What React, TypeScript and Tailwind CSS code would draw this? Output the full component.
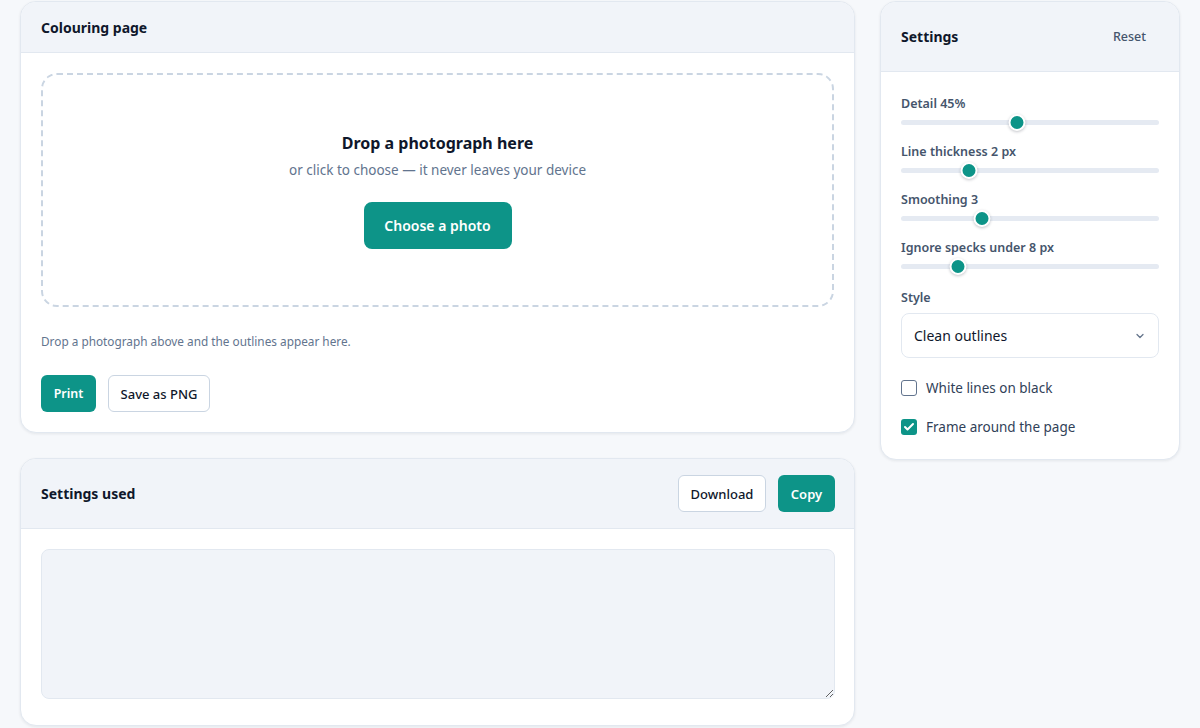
import { useState } from "react";

const sliders = [
  { label: "Detail 45%", pct: 44.8 },
  { label: "Line thickness 2 px", pct: 24.8 },
  { label: "Smoothing 3", pct: 30.2 },
  { label: "Ignore specks under 8 px", pct: 20.2 },
];

function Slider({ label, pct }: { label: string; pct: number }) {
  return (
    <div>
      <div className="text-[12.5px] font-semibold leading-5 text-slate-600">{label}</div>
      <div className="relative h-4">
        <div className="absolute left-0 right-0 top-[6px] h-[5px] rounded-full bg-[#e5eaf2]" />
        <div
          className="absolute top-[-0.5px] h-[17px] w-[17px] -translate-x-1/2 rounded-full border-2 border-white bg-[#0d9488] shadow-[0_1px_3px_rgba(15,23,42,0.25)]"
          style={{ left: `calc(8.5px + (100% - 17px) * ${pct / 100})` }}
        />
      </div>
    </div>
  );
}

function Check({ checked, onToggle, label }: { checked: boolean; onToggle: () => void; label: string }) {
  return (
    <label className="flex cursor-pointer items-center gap-[9px]" onClick={onToggle}>
      <span
        className={
          checked
            ? "flex h-4 w-4 items-center justify-center rounded-[3px] bg-[#0d9488]"
            : "flex h-4 w-4 items-center justify-center rounded-[3px] border border-slate-500 bg-white"
        }
      >
        {checked && (
          <svg width="12" height="12" viewBox="0 0 24 24" fill="none" stroke="white" strokeWidth="4" strokeLinecap="round" strokeLinejoin="round">
            <path d="M20 6 9 17l-5-5" />
          </svg>
        )}
      </span>
      <span className="text-[13.5px] text-slate-700">{label}</span>
    </label>
  );
}

export default function App() {
  const [invert, setInvert] = useState(false);
  const [frame, setFrame] = useState(true);

  return (
    <div
      className="min-h-[728px] bg-[#f6f8fb] px-5 pt-px text-slate-900"
      style={{ fontFamily: '"Noto Sans", "Open Sans", sans-serif' }}
    >
      <div className="flex items-start gap-[25px]">
        {/* Main column */}
        <div className="flex w-[835px] flex-col gap-[25px]">
          <section className="overflow-hidden rounded-2xl border border-slate-200 bg-white shadow-[0_1px_3px_rgba(15,23,42,0.08)]">
            <header className="flex h-[51px] items-center border-b border-slate-200 bg-[#f1f4f9] px-5">
              <h2 className="text-[14px] font-bold">Colouring page</h2>
            </header>
            <div className="px-5 pb-5 pt-5">
              <div className="flex h-[234px] flex-col items-center rounded-2xl border-2 border-dashed border-slate-300 pt-[56px]">
                <div className="text-[16px] font-bold leading-6">Drop a photograph here</div>
                <div className="mt-[5px] text-[13.5px] leading-5 text-slate-500">
                  or click to choose — it never leaves your device
                </div>
                <button className="mt-[22px] h-[47px] w-[148px] rounded-lg bg-[#0d9488] text-[14px] font-semibold text-white">
                  Choose a photo
                </button>
              </div>
              <p className="mt-[26px] text-[11.8px] text-slate-500">
                Drop a photograph above and the outlines appear here.
              </p>
              <div className="mt-[24px] flex gap-3">
                <button className="h-[37px] w-[55px] rounded-md bg-[#0d9488] pt-[3px] text-[12.5px] font-semibold text-white">
                  Print
                </button>
                <button className="h-[37px] w-[102px] rounded-md border border-slate-300 bg-white pt-[3px] text-[13px] font-medium text-slate-900">
                  Save as PNG
                </button>
              </div>
            </div>
          </section>

          <section className="overflow-hidden rounded-2xl border border-slate-200 bg-white shadow-[0_1px_3px_rgba(15,23,42,0.08)]">
            <header className="flex h-[70px] items-center justify-between border-b border-slate-200 bg-[#f1f4f9] pl-5 pr-[19px]">
              <h2 className="text-[14px] font-bold">Settings used</h2>
              <div className="flex gap-3">
                <button className="h-[37px] w-[88px] rounded-md border border-slate-300 bg-white pt-[3px] text-[13px] font-medium text-slate-900">
                  Download
                </button>
                <button className="h-[37px] w-[57px] rounded-md bg-[#0d9488] pt-[3px] text-[13px] font-semibold text-white">
                  Copy
                </button>
              </div>
            </header>
            <div className="pb-[26px] pl-5 pr-[19px] pt-5">
              <textarea className="block h-[150px] w-full resize-y rounded-lg border border-slate-200 bg-[#f1f4f9] p-3 text-[13px] outline-none" />
            </div>
          </section>
        </div>

        {/* Sidebar */}
        <aside className="w-[300px] overflow-hidden rounded-2xl border border-slate-200 bg-white shadow-[0_1px_3px_rgba(15,23,42,0.08)]">
          <header className="flex h-[70px] items-center justify-between border-b border-slate-200 bg-[#f1f4f9] pl-5 pr-[33px]">
            <h2 className="text-[14px] font-bold">Settings</h2>
            <button className="pt-[2px] text-[12.5px] font-medium text-slate-600">Reset</button>
          </header>
          <div className="px-5 pb-[21px] pt-[22px]">
            <div className="flex flex-col gap-[12px]">
              {sliders.map((s) => (
                <Slider key={s.label} label={s.label} pct={s.pct} />
              ))}
            </div>
            <div className="mt-[14px] text-[12.5px] font-semibold leading-5 text-slate-600">Style</div>
            <div className="mt-[5px] flex h-[45px] items-center justify-between rounded-lg border border-slate-200 bg-white pl-3 pr-3">
              <span className="text-[14px] text-slate-900">Clean outlines</span>
              <svg width="12" height="12" viewBox="0 0 24 24" fill="none" stroke="#64748b" strokeWidth="2.5" strokeLinecap="round" strokeLinejoin="round">
                <path d="m6 9 6 6 6-6" />
              </svg>
            </div>
            <div className="mt-[20px] flex flex-col gap-[19px]">
              <Check checked={invert} onToggle={() => setInvert(!invert)} label="White lines on black" />
              <Check checked={frame} onToggle={() => setFrame(!frame)} label="Frame around the page" />
            </div>
          </div>
        </aside>
      </div>
    </div>
  );
}
